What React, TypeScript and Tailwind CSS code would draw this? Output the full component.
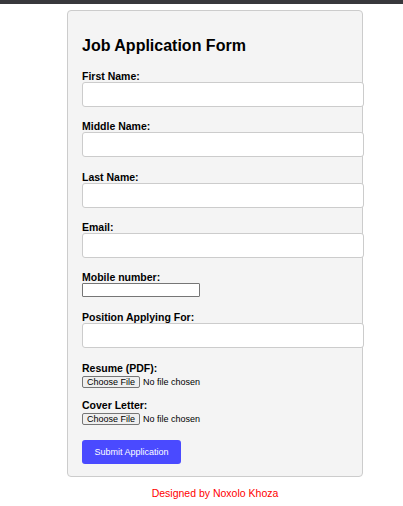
import React from "react";

const font = { fontFamily: '"Liberation Sans", Arial, sans-serif' };

function TextField({ label, mb = "mb-[14.5px]" }: { label: string; mb?: string }) {
  return (
    <div className={mb}>
      <label className="block text-[10.5px] leading-[11px] font-bold text-black">{label}</label>
      <input
        type="text"
        className="block w-[282px] h-[25px] bg-white border border-[#cccccc] rounded-[3px] outline-none"
      />
    </div>
  );
}

function FileField({ label, mb }: { label: string; mb: string }) {
  return (
    <div className={mb}>
      <label className="block text-[10.5px] leading-[11px] font-bold text-black">{label}</label>
      <div className="flex items-center h-[16px]">
        <span className="flex items-center h-[12px] px-[4px] bg-[#efefef] border border-[#767676] rounded-[2px] text-[9px] leading-[10px] text-black">
          Choose File
        </span>
        <span className="ml-[3px] text-[9px] leading-[10px] text-black">No file chosen</span>
      </div>
    </div>
  );
}

export default function App() {
  return (
    <div className="w-[403px] min-h-[506px] bg-white" style={font}>
      <div className="h-[4px] bg-[#38383c]" />
      <div className="ml-[67px] w-[296px] mt-[6px] bg-[#f4f4f4] border border-[#cccccc] rounded-[4px] pl-[14px] pr-[14px] pt-[26px] pb-[12px]">
        <h2 className="text-[16px] leading-[18px] font-bold text-black mb-[15.5px]">Job Application Form</h2>
        <TextField label="First Name:" />
        <TextField label="Middle Name:" />
        <TextField label="Last Name:" />
        <TextField label="Email:" mb="mb-[14px]" />
        <div className="mb-[15px]">
          <label className="block text-[10.5px] leading-[11px] font-bold text-black">Mobile number:</label>
          <input
            type="tel"
            className="block w-[118px] h-[13.5px] bg-white border border-[#767676] rounded-[1px] outline-none"
          />
        </div>
        <TextField label="Position Applying For:" mb="mb-[15px]" />
        <FileField label="Resume (PDF):" mb="mb-[10px]" />
        <FileField label="Cover Letter:" mb="mb-[11px]" />
        <button className="w-[99px] h-[24px] bg-[#4a4aff] rounded-[3px] text-white text-[9px] leading-[10px]">
          Submit Application
        </button>
      </div>
      <div className="ml-[67px] w-[296px] mt-[10.5px] text-center text-[10.5px] leading-[13px] text-[#ff0000]">
        Designed by Noxolo Khoza
      </div>
    </div>
  );
}
